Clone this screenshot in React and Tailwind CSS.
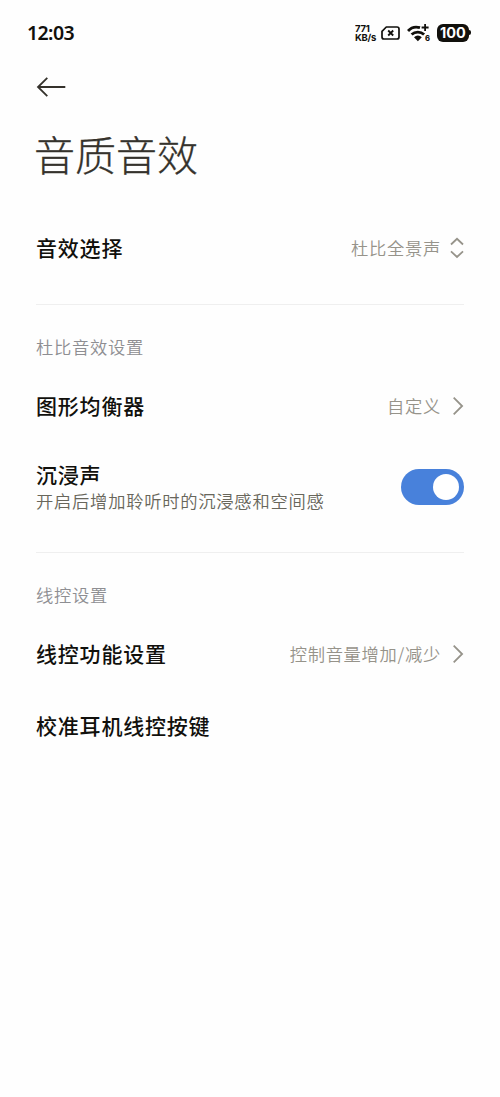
import React, { useState } from 'react';

const SECTIONS = [
  {
    id: 'effect',
    items: [{ id: 'select', label: '音效选择', value: '杜比全景声', icon: 'updown' }],
  },
  {
    id: 'dolby',
    title: '杜比音效设置',
    items: [
      { id: 'equalizer', label: '图形均衡器', value: '自定义', icon: 'right' },
      { id: 'immersive', label: '沉浸声', desc: '开启后增加聆听时的沉浸感和空间感', toggle: true },
    ],
  },
  {
    id: 'remote',
    title: '线控设置',
    items: [
      { id: 'function', label: '线控功能设置', value: '控制音量增加/减少', icon: 'right' },
      { id: 'calibrate', label: '校准耳机线控按键' },
    ],
  },
];

function StatusBar() {
  return (
    <div className="h-[65px] pl-[27px] pr-[29px] flex items-center justify-between text-[#11100c]">
      <span className="font-['Noto_Sans',sans-serif] text-[19.5px] leading-none font-semibold tracking-[-0.6px]">12:03</span>
      <div className="flex items-center">
        <div className="w-[23px] mr-[3px] font-['Inter',sans-serif] text-[9.5px] leading-[9px] font-bold tracking-[-0.3px] whitespace-nowrap">
          <div className="h-[9px] overflow-hidden">771</div>
          <div className="h-[9px]">KB/s</div>
        </div>
        <svg width="19" height="14" viewBox="0 0 19 14" fill="none" stroke="currentColor" strokeWidth="1.7" className="mr-[7px]">
          <path d="M5.3 1H16a2 2 0 0 1 2 2v8a2 2 0 0 1-2 2H3a2 2 0 0 1-2-2V5.3z" strokeLinejoin="round" />
          <path d="M7.2 4.5l5 5M12.2 4.5l-5 5" strokeWidth="1.8" />
        </svg>
        <svg width="24" height="20" viewBox="0 0 24 20" fill="none" stroke="currentColor" className="mr-[6px]">
          <path d="M1 8C4.2 4.4 8.8 3.4 13 4.7" strokeWidth="2.8" />
          <path d="M4.6 11.6c3.5-3.4 9-3.4 12.5 0" strokeWidth="2.8" />
          <path d="M7 14.2a5.6 5.6 0 0 1 7.8 0L10.9 18.2z" fill="currentColor" stroke="none" />
          <path d="M18.1 1v7M14.6 4.5h7" strokeWidth="1.8" />
          <text x="18" y="18" fontSize="7.5" fontWeight="800" fontFamily="Inter, sans-serif" fill="currentColor" stroke="none">6</text>
        </svg>
        <div className="w-[32px] h-[18px] pt-px rounded-[6px] bg-[#11100c] text-white flex items-center justify-center font-['Inter',sans-serif] text-[14.5px] leading-none font-bold">
          100
        </div>
        <div className="w-[2px] h-[5px] rounded-r-full bg-[#11100c]" />
      </div>
    </div>
  );
}

function RowIcon({ type }) {
  if (type === 'updown') {
    return (
      <svg width="14" height="22" viewBox="0 0 14 22" fill="none" stroke="#96938a" strokeWidth="1.8">
        <path d="M1 7.5L7 1.8l6 5.7M1 14.3l6 5.7 6-5.7" />
      </svg>
    );
  }
  return (
    <svg width="14" height="20" viewBox="0 0 14 20" fill="none" stroke="#96938a" strokeWidth="1.8">
      <path d="M3.7 1.6L12.1 10l-8.4 8.4" />
    </svg>
  );
}

function Toggle({ checked, onChange }) {
  return (
    <button
      role="switch"
      aria-checked={checked}
      onClick={() => onChange(!checked)}
      className={`w-[63px] h-[36px] rounded-full px-[5px] flex items-center ${checked ? 'bg-[#4881db] justify-end' : 'bg-gray-200 justify-start'}`}
    >
      <span className="w-[26px] h-[26px] rounded-full bg-white" />
    </button>
  );
}

function SettingRow({ item, checked, onToggle }) {
  return (
    <div className={`flex items-center justify-between ${item.desc ? 'h-[90px]' : 'h-[72px]'}`}>
      <div className="pb-[2px]">
        <div className="text-[21px] leading-[30px] tracking-[0.8px] font-medium text-[#11100c]">{item.label}</div>
        {item.desc && <div className="text-[17.3px] leading-[24px] tracking-[0.75px] font-[350] text-[#68665b]">{item.desc}</div>}
      </div>
      {item.value && (
        <div className="flex items-center gap-[9px]">
          <span className="text-[17.3px] leading-[24px] tracking-[0.7px] font-[350] text-[#96938a]">{item.value}</span>
          <RowIcon type={item.icon} />
        </div>
      )}
      {item.toggle && <Toggle checked={checked} onChange={onToggle} />}
    </div>
  );
}

function App() {
  const [immersive, setImmersive] = useState(true);

  return (
    <div className="min-h-[1097px] bg-[#fefefe] font-['Noto_Sans_CJK_SC',sans-serif]">
      <StatusBar />
      <div className="px-9">
        <button aria-label="返回" className="h-[44px] flex items-center text-[#35322c]">
          <svg width="30" height="20" viewBox="0 0 30 20" fill="none" stroke="currentColor" strokeWidth="1.8">
            <path d="M29.3 10H2M11.3 .8L2 10l9.3 9.2" />
          </svg>
        </button>
        <h1 className="h-[103px] -ml-[2px] pt-[14px] text-[41px] leading-[60px] font-light text-[#35322c] [-webkit-text-stroke:0.3px_#35322c]">音质音效</h1>

        {SECTIONS.map((section, i) => (
          <section key={section.id} className={i > 0 ? 'mt-5 border-t-[1.5px] border-[#efefef]' : ''}>
            {section.title && (
              <h2 className="h-[65px] pt-[30px] text-[17.3px] leading-[24px] tracking-[0.7px] font-[350] text-[#8e8e92]">{section.title}</h2>
            )}
            {section.items.map((item) => (
              <SettingRow key={item.id} item={item} checked={immersive} onToggle={setImmersive} />
            ))}
          </section>
        ))}
      </div>
    </div>
  );
}

export default App;
